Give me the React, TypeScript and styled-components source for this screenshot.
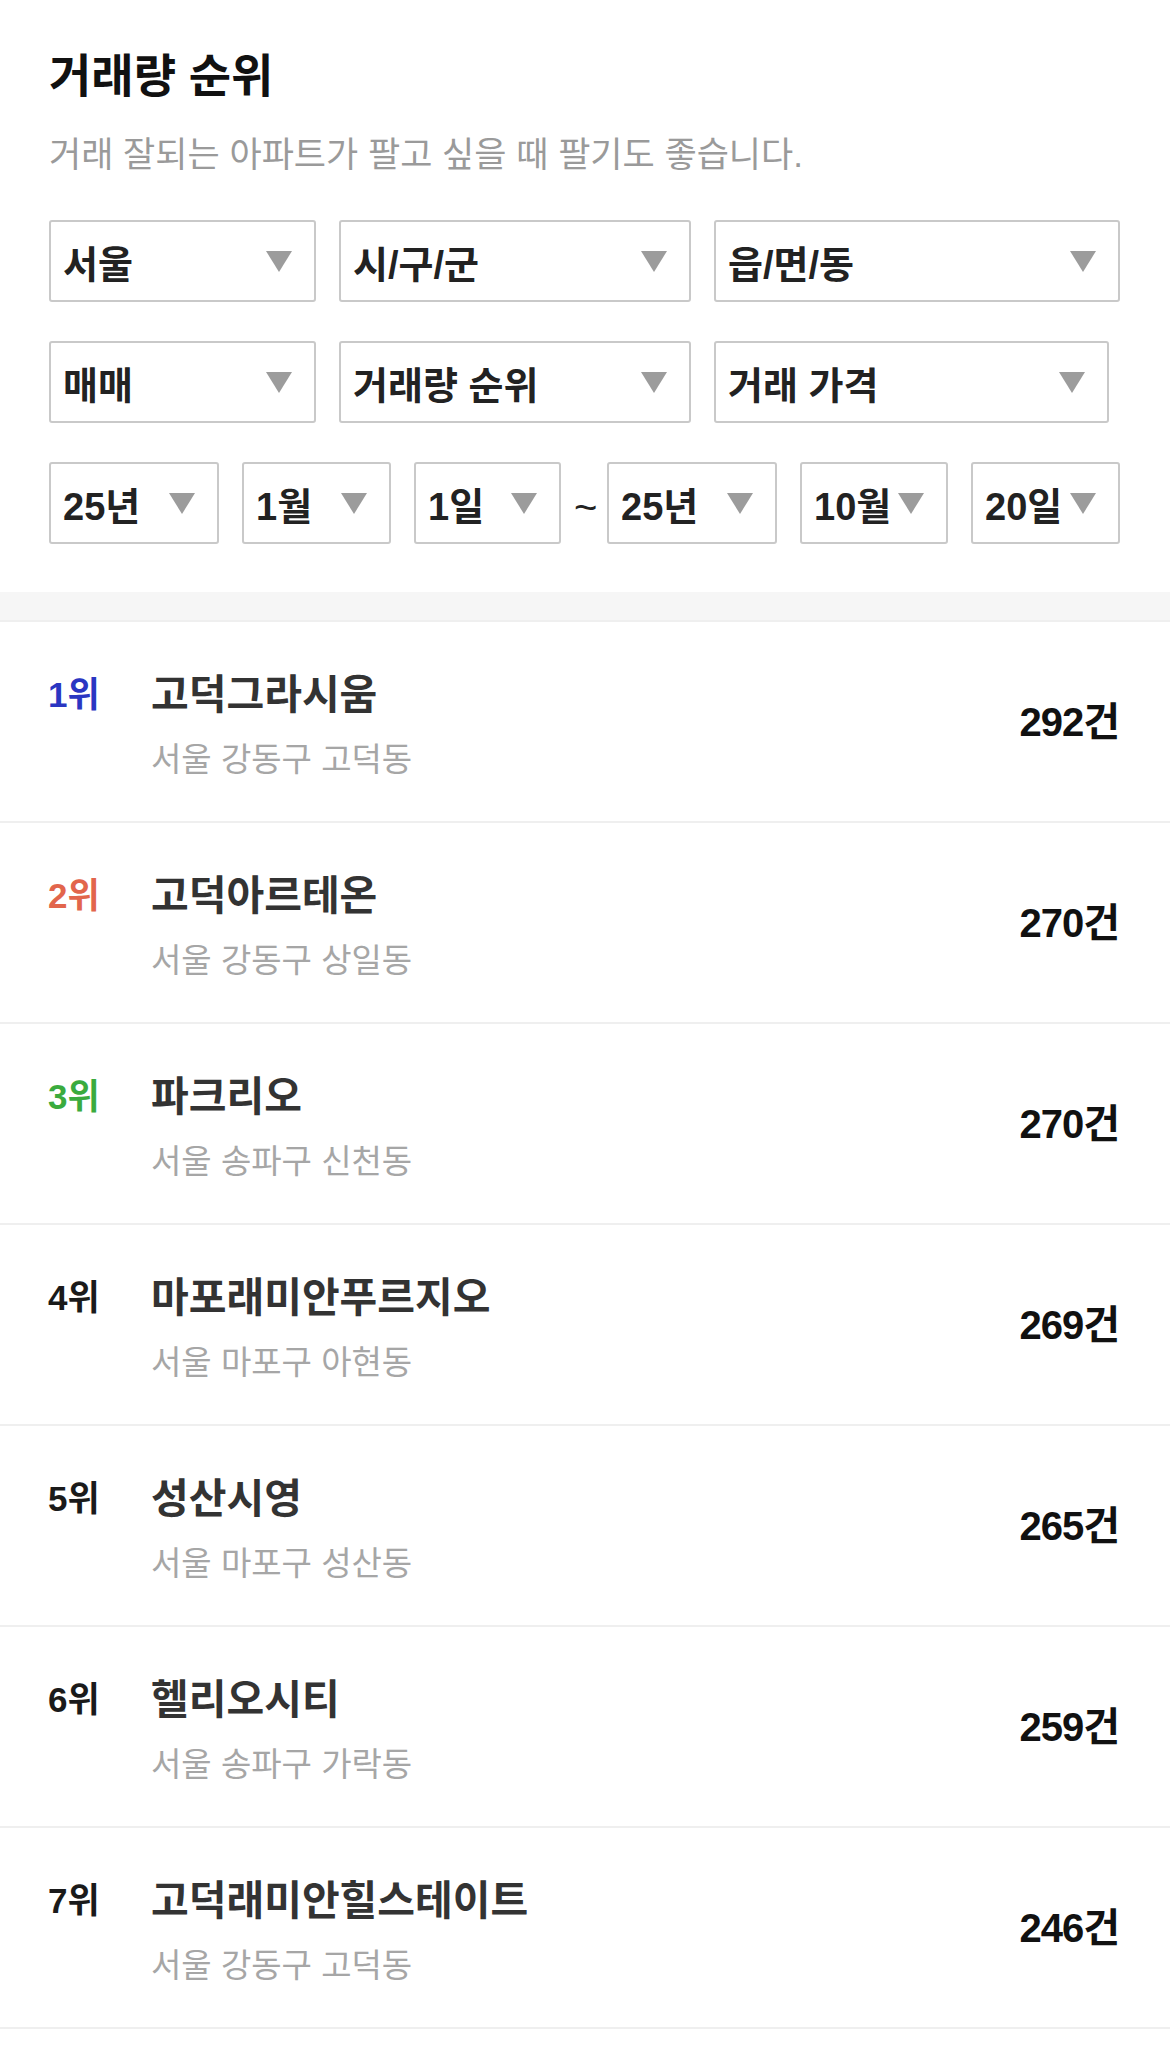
import styled, { createGlobalStyle } from "styled-components";

type Deal = {
  rank: number;
  name: string;
  address: string;
  count: number;
};

const deals: Deal[] = [
  { rank: 1, name: "고덕그라시움", address: "서울 강동구 고덕동", count: 292 },
  { rank: 2, name: "고덕아르테온", address: "서울 강동구 상일동", count: 270 },
  { rank: 3, name: "파크리오", address: "서울 송파구 신천동", count: 270 },
  { rank: 4, name: "마포래미안푸르지오", address: "서울 마포구 아현동", count: 269 },
  { rank: 5, name: "성산시영", address: "서울 마포구 성산동", count: 265 },
  { rank: 6, name: "헬리오시티", address: "서울 송파구 가락동", count: 259 },
  { rank: 7, name: "고덕래미안힐스테이트", address: "서울 강동구 고덕동", count: 246 },
];

const rankColors: Record<number, string> = {
  1: "#2a36c2",
  2: "#e2654c",
  3: "#3aab3e",
};

export default function App() {
  return (
    <>
      <GlobalStyle />
      <Page>
        <Header>
          <Title>거래량 순위</Title>
          <Subtitle>거래 잘되는 아파트가 팔고 싶을 때 팔기도 좋습니다.</Subtitle>

          <SelectRow>
            <Select $w={267}>
              <span>서울</span>
              <Arrow />
            </Select>
            <Select $w={352}>
              <span>시/구/군</span>
              <Arrow />
            </Select>
            <Select $w={406}>
              <span>읍/면/동</span>
              <Arrow />
            </Select>
          </SelectRow>

          <SelectRow>
            <Select $w={267}>
              <span>매매</span>
              <Arrow />
            </Select>
            <Select $w={352}>
              <span>거래량 순위</span>
              <Arrow />
            </Select>
            <Select $w={395}>
              <span>거래 가격</span>
              <Arrow />
            </Select>
          </SelectRow>

          <SelectRow>
            <Select $w={170}>
              <span>25년</span>
              <Arrow />
            </Select>
            <Select $w={149}>
              <span>1월</span>
              <Arrow />
            </Select>
            <Select $w={147}>
              <span>1일</span>
              <Arrow />
            </Select>
            <Tilde>~</Tilde>
            <Select $w={170}>
              <span>25년</span>
              <Arrow />
            </Select>
            <Select $w={148}>
              <span>10월</span>
              <Arrow />
            </Select>
            <Select $w={149}>
              <span>20일</span>
              <Arrow />
            </Select>
          </SelectRow>
        </Header>

        <Divider />

        <List>
          {deals.map((d) => (
            <Row key={d.rank}>
              <Left>
                <Rank $color={rankColors[d.rank]}>{d.rank}위</Rank>
                <Info>
                  <Name>{d.name}</Name>
                  <Address>{d.address}</Address>
                </Info>
              </Left>
              <Count>{d.count}건</Count>
            </Row>
          ))}
        </List>
      </Page>
    </>
  );
}

const GlobalStyle = createGlobalStyle`
  html, body {
    margin: 0;
    padding: 0;
    background: #ffffff;
  }
  body {
    font-family: "Liberation Sans", "Noto Sans CJK KR", sans-serif;
    color: #222;
  }
`;

const Page = styled.div`
  width: 1170px;
  min-height: 2050px;
  background: #fff;
`;

const Header = styled.div`
  padding: 49px 49px 48px;
  display: flex;
  flex-direction: column;
`;

const Title = styled.h1`
  margin: 0;
  font-size: 46px;
  line-height: 54px;
  font-weight: 700;
  color: #111;
`;

const Subtitle = styled.p`
  margin: 31px 0 0;
  font-size: 35px;
  line-height: 42px;
  font-weight: 400;
  color: #9a9a9a;
`;

const SelectRow = styled.div`
  display: flex;
  align-items: center;
  gap: 23px;
  margin-top: 39px;

  &:first-of-type {
    margin-top: 44px;
  }
`;

const Select = styled.div<{ $w: number }>`
  box-sizing: border-box;
  width: ${(p) => p.$w}px;
  height: 82px;
  border: 2px solid #c9c9c9;
  border-radius: 3px;
  padding: 0 22px 0 12px;
  display: flex;
  align-items: center;
  justify-content: space-between;
  font-size: 38px;
  font-weight: 700;
  color: #222;
  white-space: nowrap;
`;

const Arrow = styled.span`
  flex: none;
  width: 0;
  height: 0;
  border-left: 13px solid transparent;
  border-right: 13px solid transparent;
  border-top: 21px solid #9c9c9c;
`;

const Tilde = styled.span`
  width: 23px;
  margin: 8px -13px 0 -10px;
  font-size: 40px;
  color: #222;
  text-align: center;
`;

const Divider = styled.div`
  height: 28px;
  background: #f6f6f6;
  border-bottom: 2px solid #efefef;
`;

const List = styled.div`
  display: flex;
  flex-direction: column;
`;

const Row = styled.div`
  box-sizing: border-box;
  height: 201px;
  padding: 0 51px 0 48px;
  display: flex;
  align-items: center;
  justify-content: space-between;
  border-bottom: 2px solid #efefef;
`;

const Left = styled.div`
  display: flex;
  align-items: flex-start;
  padding-top: 6px;
`;

const Rank = styled.div<{ $color?: string }>`
  width: 103px;
  font-size: 35px;
  line-height: 48px;
  font-weight: 700;
  color: ${(p) => p.$color || "#1a1a1a"};
`;

const Info = styled.div`
  display: flex;
  flex-direction: column;
`;

const Name = styled.div`
  font-size: 41px;
  line-height: 48px;
  font-weight: 700;
  color: #333;
`;

const Address = styled.div`
  margin-top: 22px;
  font-size: 33px;
  line-height: 38px;
  color: #a6a6a6;
`;

const Count = styled.div`
  font-size: 40px;
  line-height: 1;
  font-weight: 700;
  color: #111;
  letter-spacing: -1px;
`;
